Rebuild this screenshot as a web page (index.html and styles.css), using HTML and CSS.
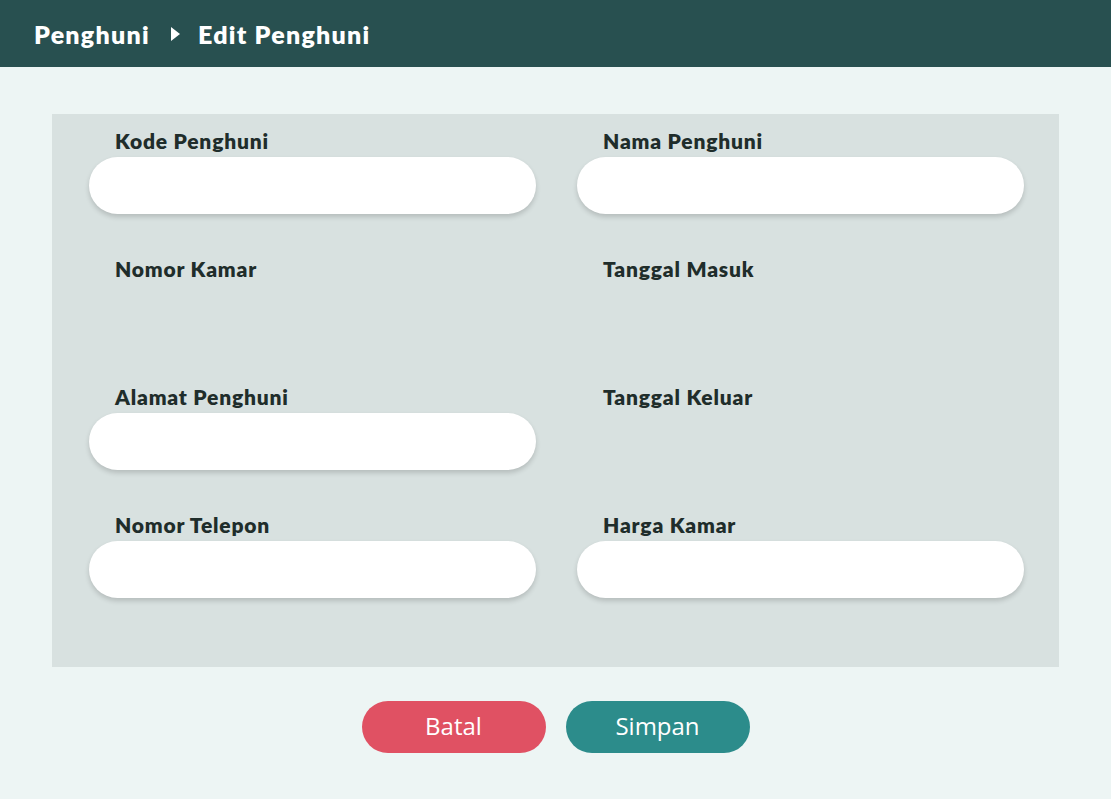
FILE: index.html
```html
<!DOCTYPE html>
<html lang="id">
<head>
<meta charset="utf-8">
<title>Edit Penghuni</title>
<link rel="stylesheet" href="styles.css">
</head>
<body>
<header class="topbar">
  <span class="crumb">Penghuni</span>
  <svg class="caret" width="9" height="14" viewBox="0 0 9 14"><path d="M0 0 L9 7 L0 14 Z" fill="#fff"/></svg>
  <span class="crumb">Edit Penghuni</span>
</header>
<main class="content">
  <form class="panel">
    <div class="field"><label class="label">Kode Penghuni</label><input class="input" type="text"></div>
    <div class="field"><label class="label">Nama Penghuni</label><input class="input" type="text"></div>
    <div class="field"><label class="label">Nomor Kamar</label></div>
    <div class="field"><label class="label">Tanggal Masuk</label></div>
    <div class="field"><label class="label">Alamat Penghuni</label><input class="input" type="text"></div>
    <div class="field"><label class="label">Tanggal Keluar</label></div>
    <div class="field"><label class="label">Nomor Telepon</label><input class="input" type="text"></div>
    <div class="field"><label class="label">Harga Kamar</label><input class="input" type="text"></div>
  </form>
  <div class="actions">
    <button class="btn btn-cancel" type="button">Batal</button>
    <button class="btn btn-save" type="button">Simpan</button>
  </div>
</main>
</body>
</html>
```
FILE: styles.css
```css
* { box-sizing: border-box; }
html, body { margin: 0; padding: 0; }
body {
  background: #edf5f4;
  font-family: "Lato", "Inter", sans-serif;
  width: 1111px;
  height: 799px;
  overflow: hidden;
}
.topbar {
  height: 67px;
  background: #285050;
  display: flex;
  align-items: center;
  padding-left: 34px;
  color: #fff;
}
.crumb {
  font-family: "Lato", sans-serif;
  font-weight: 800;
  font-size: 25px;
  letter-spacing: 1.25px;
}
.caret { margin: 0 18px 0 21px; }
.content { padding: 47px 52px 0; }
.panel {
  background: #d8e1e0;
  display: grid;
  grid-template-columns: 447px 447px;
  column-gap: 41px;
  grid-template-rows: 128px 128px 128px 85px;
  padding: 15px 35px 69px 37px;
  margin: 0;
}
.field { display: flex; flex-direction: column; }
.label {
  font-weight: 800;
  font-size: 21px;
  line-height: 24px;
  letter-spacing: 0.8px;
  color: #1f2d2b;
  padding-left: 26px;
  margin-bottom: 4px;
}
.input {
  height: 57px;
  width: 447px;
  border: none;
  border-radius: 29px;
  background: #fff;
  box-shadow: 0 3px 5px rgba(0,0,0,0.16);
  outline: none;
}
.actions {
  display: flex;
  justify-content: center;
  gap: 20px;
  margin-top: 34px;
}
.btn {
  width: 184px;
  height: 52px;
  border: none;
  border-radius: 26px;
  color: #fff;
  font-family: "Open Sans", "Noto Sans", sans-serif;
  font-size: 24px;
  padding: 0 0 4px;
}
.btn-cancel { background: #e05163; }
.btn-save { background: #2c8c8b; }
```
